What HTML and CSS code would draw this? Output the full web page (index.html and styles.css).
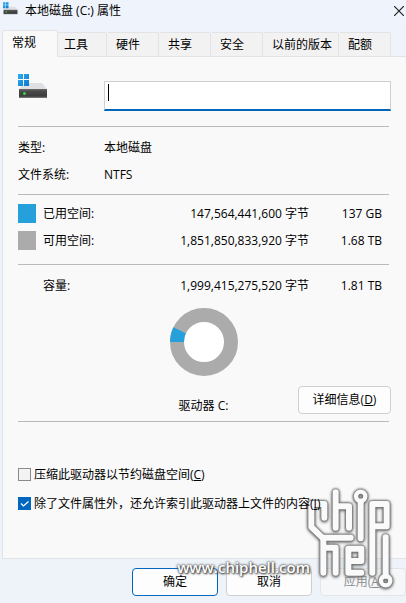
FILE: index.html
```html
<!DOCTYPE html>
<html lang="zh-CN">
<head>
  <meta charset="UTF-8" />
  <meta name="viewport" content="width=device-width, initial-scale=1.0"/>
  <title>本地磁盘 (C:) 属性</title>
  <link rel="stylesheet" href="styles.css">
</head>
<body>
  <svg width="0" height="0" class="defs">
    <defs>
      <linearGradient id="tile" x1="0" y1="0" x2="1" y2="1">
        <stop offset="0" stop-color="#2fb0ee"/>
        <stop offset="1" stop-color="#0a78d0"/>
      </linearGradient>
      <linearGradient id="front" x1="0" y1="0" x2="0" y2="1">
        <stop offset="0" stop-color="#6a6a6a"/>
        <stop offset="0.25" stop-color="#4a4a4a"/>
        <stop offset="0.8" stop-color="#3c3c3c"/>
        <stop offset="1" stop-color="#858585"/>
      </linearGradient>
      <symbol id="drive" viewBox="0 0 30 25">
        <path d="M7 9h17l5 6H1z" fill="#dfe0e4"/>
        <rect x="1" y="15" width="28" height="9" fill="url(#front)"/>
        <circle cx="6.5" cy="19.5" r="1.5" fill="#35d43c"/>
        <path d="M0 0h5v5H0zM6 0h5v5H6zM0 6h5v6H0zM6 6h5v6H6z" fill="url(#tile)"/>
      </symbol>
    </defs>
  </svg>

  <div class="window">
    <header class="titlebar">
      <svg class="small-icon"><use href="#drive"/></svg>
      <h1>本地磁盘 (C:) 属性</h1>
      <button class="close" aria-label="关闭">
        <svg width="10" height="10" viewBox="0 0 10 10"><path d="M0 0l10 10M10 0L0 10" stroke="#222" stroke-width="1.2"/></svg>
      </button>
    </header>

    <nav class="tabs">
      <button class="tab active">常规</button>
      <button class="tab">工具</button>
      <button class="tab">硬件</button>
      <button class="tab">共享</button>
      <button class="tab">安全</button>
      <button class="tab wide">以前的版本</button>
      <button class="tab">配额</button>
    </nav>

    <main class="panel">
      <div class="drive">
        <svg class="drive-icon"><use href="#drive"/></svg>
        <input type="text" class="drive-name" aria-label="卷标">
      </div>
      <hr>
      <dl class="info">
        <dt>类型:</dt><dd>本地磁盘</dd>
        <dt>文件系统:</dt><dd>NTFS</dd>
      </dl>
      <hr>
      <table class="space usage">
        <tr>
          <td class="key"><span class="swatch used"></span></td>
          <th>已用空间:</th>
          <td>147,564,441,600 字节</td>
          <td class="size">137 GB</td>
        </tr>
        <tr>
          <td class="key"><span class="swatch free"></span></td>
          <th>可用空间:</th>
          <td>1,851,850,833,920 字节</td>
          <td class="size">1.68 TB</td>
        </tr>
      </table>
      <hr>
      <table class="space total">
        <tr>
          <td class="key"></td>
          <th>容量:</th>
          <td>1,999,415,275,520 字节</td>
          <td class="size">1.81 TB</td>
        </tr>
      </table>
      <div class="details">
        <svg class="chart" width="68" height="68" viewBox="0 0 68 68">
          <circle cx="34" cy="34" r="27" fill="#fff" stroke="#ababab" stroke-width="14"/>
          <path d="M0 34A34 34 0 0 1 3.4 19.2L15.8 25.3A20 20 0 0 0 14 34z" fill="#26a0da"/>
        </svg>
        <span class="drive-label">驱动器 C:</span>
        <button class="btn">详细信息(<u>D</u>)</button>
      </div>
      <hr>
      <div class="options">
        <label><input type="checkbox">压缩此驱动器以节约磁盘空间(<u>C</u>)</label>
        <label><input type="checkbox" checked>除了文件属性外，还允许索引此驱动器上文件的内容(<u>I</u>)</label>
      </div>
    </main>

    <footer class="actions">
      <button class="btn primary">确定</button>
      <button class="btn">取消</button>
      <button class="btn" disabled>应用(<u>A</u>)</button>
    </footer>

    <!-- watermark -->
    <div class="site">www.chiphell.com</div>
    <svg class="logo" viewBox="0 0 318 354" fill="none" stroke-linecap="round" stroke-linejoin="round">
      <g stroke="#fafafa" stroke-width="18">
        <path d="M73 98V57H34V126L67 158H152"/>
        <path d="M107 22V128M107 64H147V128"/>
        <path d="M182 50V160"/>
        <path d="M217 263V57H260V124H217"/>
        <path d="M70 158V263M70 188H107V263"/>
        <path d="M184 263H145V191H184V228H145"/>
        <path d="M257 157V272"/>
        <circle cx="182" cy="34" r="14" stroke-width="13"/>
        <circle cx="257" cy="287" r="14" stroke-width="13"/>
      </g>
    </svg>
  </div>
</body>
</html>
```

FILE: styles.css
```css
* {
  box-sizing: border-box;
}

body {
  margin: 0;
  font-family: "Open Sans", "Noto Sans CJK SC", sans-serif;
  font-size: 12px;
  line-height: 16px;
  color: #000;
}

button, input {
  font: inherit;
  color: inherit;
}

.defs {
  position: absolute;
}

.window {
  position: relative;
  min-height: 100vh;
  overflow: hidden;
  display: flex;
  flex-direction: column;
  background: linear-gradient(#eff3fb, #edf3f8);
}

.titlebar {
  display: flex;
  align-items: center;
  gap: 7px;
  height: 30px;
  padding: 0 2px 8px 3px;
}

.titlebar h1 {
  flex: 1;
  margin: 0;
  font-size: 12px;
  font-weight: normal;
}

.small-icon {
  align-self: flex-start;
  width: 15px;
  height: 13px;
  margin-top: 2px;
}

.close {
  display: flex;
  padding: 0;
  border: none;
  background: none;
}

.tabs {
  display: flex;
  align-items: flex-end;
  height: 27px;
  padding-left: 2px;
  margin-bottom: -1px;
  z-index: 1;
}

.tab {
  width: 52px;
  height: 25px;
  padding: 0 0 0 9px;
  border: 1px solid #e3e3e5;
  border-left: none;
  border-radius: 2px 2px 0 0;
  background: #f2f2f3;
  text-align: left;
}

/* the open tab covers the edge of the next one */
.tab.active {
  width: 56px;
  height: 27px;
  margin-right: -3px;
  padding-bottom: 2px;
  border-left: 1px solid #e3e3e5;
  border-bottom: none;
  background: #f9f9f9;
  z-index: 1;
}

.tab.wide {
  width: 76px;
}

.panel {
  flex: 1;
  margin-left: 2px;
  padding: 0 15px;
  border: 1px solid #e1e4e7;
  border-right: none;
  background: #f9f9f9;
}

hr {
  height: 1px;
  margin: 0 2px 0 0;
  border: none;
  background: #bababa;
}

.drive {
  display: flex;
  justify-content: space-between;
  height: 69px;
  padding-top: 17px;
}

.drive-icon {
  width: 30px;
  height: 25px;
}

/* the caret is painted as a background so that it does not blink */
.drive-name {
  flex: 1;
  min-width: 0;
  height: 30px;
  margin: 7px 0 0 56px;
  padding: 0 4px;
  border: 1px solid #cfcfcf;
  border-bottom: 2px solid #0067b8;
  outline: none;
  background: linear-gradient(#000, #000) 3px 2px / 1px 17px no-repeat #fff;
}

.info {
  display: grid;
  grid-template-columns: 86px 1fr;
  margin: 0;
  padding: 7px 0 6px;
  line-height: 27px;
}

.info dd {
  margin: 0;
}

.space {
  width: 100%;
  border-collapse: collapse;
  line-height: 27px;
}

.space td, .space th {
  height: 27px;
  padding: 0;
  text-align: right;
  white-space: nowrap;
}

.space th {
  width: 80px;
  font-weight: normal;
  text-align: left;
}

.space .key {
  width: 25px;
}

.space .size {
  width: 82px;
  padding-right: 9px;
}

.usage {
  margin: 5px 0 10px;
}

.total {
  margin: 7px 0 9px;
}

.swatch {
  display: block;
  width: 18px;
  height: 19px;
}

.used {
  background: #26a0da;
}

.free {
  background: #ababab;
}

.details {
  display: grid;
  grid-template-columns: 1fr auto 1fr;
  align-items: end;
  justify-items: center;
  row-gap: 10px;
  margin: 0 0 7px;
  padding-right: 2px;
}

.chart {
  grid-column: 1 / -1;
}

.drive-label {
  grid-column: 2;
}

.details .btn {
  justify-self: end;
  width: 93px;
  margin-right: -2px;
}

.btn {
  width: 86px;
  height: 28px;
  padding: 0;
  border: 1px solid #d0d0d0;
  border-radius: 4px;
  background: #fdfdfd;
}

.btn.primary {
  border-color: #0067c0;
}

.btn:disabled {
  border-color: #e3e6e9;
  background: #f5f7f9;
  color: #8d8d8d;
}

/* stays above the watermark */
.options {
  position: relative;
  z-index: 2;
  padding-top: 38px;
}

.options label {
  display: flex;
  align-items: center;
  height: 29px;
  white-space: nowrap;
}

.options input {
  appearance: none;
  flex: none;
  width: 13px;
  height: 13px;
  margin: 0 3px 0 0;
  border: 1px solid #8a8a8a;
  background: #f3f3f3;
}

.options input:checked {
  border-color: #0067c0;
  background: #0067c0 url("data:image/svg+xml,%3Csvg xmlns='http://www.w3.org/2000/svg' viewBox='0 0 11 11'%3E%3Cpath d='M2 5.5l2.5 2.5L9.500 3.500' fill='none' stroke='white' stroke-width='1.2'/%3E%3C/svg%3E") center / 11px no-repeat;
}

.actions {
  display: flex;
  justify-content: flex-end;
  gap: 8px;
  padding: 9px 0 7px;
}

.site {
  position: absolute;
  right: 96px;
  bottom: 28px;
  font-size: 15px;
  line-height: 16px;
  font-weight: 600;
  color: #fff;
  text-shadow: 0 0 2px #444, 1px 1px 2px #444, 0 0 3px #666;
}

.logo {
  position: absolute;
  right: 0;
  bottom: 0;
  width: 106px;
  height: 118px;
  filter: drop-shadow(0 0 1px #666) drop-shadow(0 0 1px #777) drop-shadow(0 1px 1px #888);
  pointer-events: none;
}
```
